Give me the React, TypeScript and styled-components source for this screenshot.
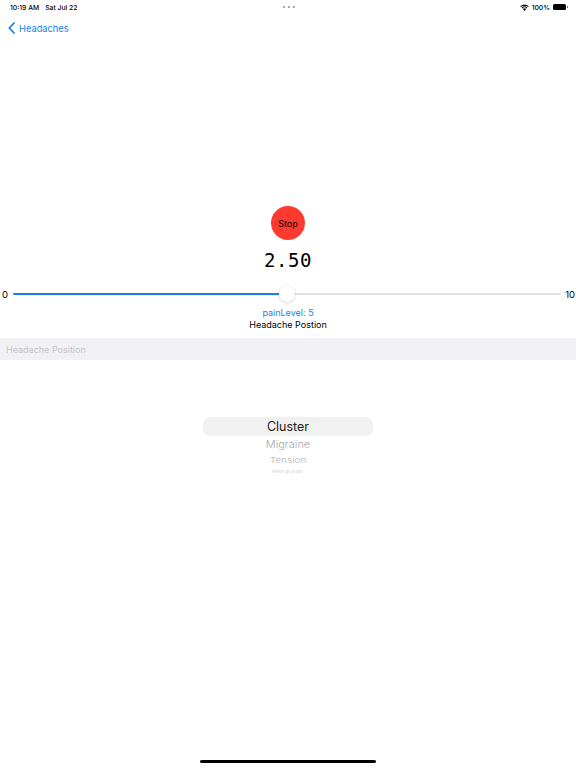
import React from "react";
import styled, { createGlobalStyle } from "styled-components";

const BLUE = "#1a7fe6";
const SF = `"Inter", "Liberation Sans", "Noto Sans", sans-serif`;

const GlobalStyle = createGlobalStyle`
  html, body {
    margin: 0;
    padding: 0;
    background: #ffffff;
  }
  body {
    font-family: ${SF};
    color: #000;
  }
`;

const Screen = styled.div`
  width: 576px;
  height: 768px;
  display: flex;
  flex-direction: column;
  overflow: hidden;
  background: #fff;
`;

const StatusBar = styled.div`
  height: 14px;
  display: grid;
  grid-template-columns: 1fr auto 1fr;
  align-items: center;
  padding: 0 8px 0 10px;
  font-size: 6.8px;
  font-weight: 500;
`;

const StatusLeft = styled.div`
  display: flex;
  gap: 6px;
`;

const StatusRight = styled.div`
  display: flex;
  justify-content: flex-end;
  align-items: center;
  gap: 3px;
`;

const Dots = styled.div`
  display: flex;
  gap: 2.5px;
`;

const Dot = styled.span`
  width: 2.5px;
  height: 2.5px;
  border-radius: 50%;
  background: #8e8e93;
`;

const Battery = styled.span`
  position: relative;
  width: 13px;
  height: 6px;
  border-radius: 1.5px;
  background: #000;
  margin-right: 2px;
  &::after {
    content: "";
    position: absolute;
    right: -2px;
    top: 2px;
    width: 1px;
    height: 2px;
    background: #777;
  }
`;

const NavBar = styled.div`
  height: 28px;
  display: flex;
  align-items: center;
  padding-left: 8px;
`;

const BackButton = styled.button`
  display: flex;
  align-items: center;
  gap: 4px;
  border: none;
  background: none;
  padding: 0;
  color: ${BLUE};
  font-family: ${SF};
  font-size: 9.3px;
`;

const Content = styled.div`
  margin-top: 164px;
  display: flex;
  flex-direction: column;
  align-items: center;
`;

const StopButton = styled.button`
  width: 34px;
  height: 34px;
  border-radius: 50%;
  border: none;
  background: #ff3b30;
  color: #000;
  font-family: ${SF};
  font-size: 9px;
  padding: 0;
`;

const Elapsed = styled.div`
  margin-top: 8px;
  height: 24px;
  line-height: 24px;
  font-family: "DejaVu Sans Mono", "Liberation Mono", monospace;
  font-size: 19px;
  letter-spacing: 0.5px;
`;

const SliderRow = styled.div`
  margin-top: 14px;
  align-self: stretch;
  height: 16px;
  display: flex;
  align-items: center;
  padding: 0 1px 0 2px;
  font-size: 9.5px;
`;

const Track = styled.div`
  position: relative;
  flex: 1;
  height: 2px;
  margin: 0 4px 0 5px;
  border-radius: 1px;
  background: #e3e3e6;
`;

const Fill = styled.div`
  height: 100%;
  border-radius: 1px;
  background: ${BLUE};
`;

const Thumb = styled.div`
  position: absolute;
  top: 50%;
  width: 16px;
  height: 16px;
  border-radius: 50%;
  background: #fff;
  transform: translate(-50%, -50%);
  box-shadow: 0 1px 3px rgba(0, 0, 0, 0.16), 0 0 0 0.5px rgba(0, 0, 0, 0.05);
`;

const Caption = styled.div<{ $color?: string; $gap?: number }>`
  margin-top: ${(p) => p.$gap ?? 0}px;
  height: 12px;
  line-height: 12px;
  font-size: 9px;
  color: ${(p) => p.$color ?? "#000"};
`;

const PositionField = styled.input`
  margin-top: 7px;
  align-self: stretch;
  height: 22px;
  box-sizing: border-box;
  border: none;
  outline: none;
  background: #f1f1f5;
  padding: 0 6px;
  font-family: ${SF};
  font-size: 9px;
  &::placeholder {
    color: #c3c3c8;
  }
`;

const Picker = styled.div`
  margin-top: 57px;
  width: 170px;
  display: flex;
  flex-direction: column;
  align-items: center;
`;

const PickerRow = styled.div<{ $size: number; $squash: number; $color: string; $height: number }>`
  height: ${(p) => p.$height}px;
  line-height: ${(p) => p.$height}px;
  font-size: ${(p) => p.$size}px;
  font-weight: 300;
  color: ${(p) => p.$color};
  transform: scaleY(${(p) => p.$squash});
`;

const Selection = styled.div`
  width: 100%;
  height: 19px;
  border-radius: 7px;
  background: #f1f1f2;
  display: flex;
  align-items: center;
  justify-content: center;
  font-size: 12.5px;
  color: #222;
`;

const HomeIndicator = styled.div`
  margin: auto auto 5px;
  width: 176px;
  height: 3.5px;
  border-radius: 2px;
  background: #000;
`;

const Chevron = () => (
  <svg width="7" height="12" viewBox="0 0 7 12">
    <path d="M6 1 L1.3 6 L6 11" fill="none" stroke={BLUE} strokeWidth="1.8" strokeLinecap="round" strokeLinejoin="round" />
  </svg>
);

const Wifi = () => (
  <svg width="9" height="7" viewBox="0 0 12 9">
    <path d="M6 9 L3.9 6.6 A3 3 0 0 1 8.1 6.6 Z" fill="#000" />
    <path d="M2.5 5.2 A5 5 0 0 1 9.5 5.2" fill="none" stroke="#000" strokeWidth="1.4" />
    <path d="M0.8 3.4 A7.5 7.5 0 0 1 11.2 3.4" fill="none" stroke="#000" strokeWidth="1.4" />
  </svg>
);

const wheel = [
  { label: "Migraine", size: 11, squash: 0.95, color: "#a6a6ab", height: 17 },
  { label: "Tension", size: 10, squash: 0.75, color: "#b0b0b5", height: 14 },
  { label: "Regular", size: 9, squash: 0.45, color: "#cdcdd1", height: 9 },
];

export default function App() {
  const pain = 5;
  return (
    <>
      <GlobalStyle />
      <Screen>
        <StatusBar>
          <StatusLeft>
            <span>10:19 AM</span>
            <span>Sat Jul 22</span>
          </StatusLeft>
          <Dots>
            <Dot />
            <Dot />
            <Dot />
          </Dots>
          <StatusRight>
            <Wifi />
            <span>100%</span>
            <Battery />
          </StatusRight>
        </StatusBar>
        <NavBar>
          <BackButton>
            <Chevron />
            Headaches
          </BackButton>
        </NavBar>
        <Content>
          <StopButton>Stop</StopButton>
          <Elapsed>2.50</Elapsed>
          <SliderRow>
            <span>0</span>
            <Track>
              <Fill style={{ width: `${pain * 10}%` }} />
              <Thumb style={{ left: `${pain * 10}%` }} />
            </Track>
            <span>10</span>
          </SliderRow>
          <Caption $color={BLUE} $gap={5}>painLevel: {pain}</Caption>
          <Caption>Headache Postion</Caption>
          <PositionField placeholder="Headache Position" />
          <Picker>
            <Selection>Cluster</Selection>
            {wheel.map((r) => (
              <PickerRow key={r.label} $size={r.size} $squash={r.squash} $color={r.color} $height={r.height}>
                {r.label}
              </PickerRow>
            ))}
          </Picker>
        </Content>
        <HomeIndicator />
      </Screen>
    </>
  );
}
